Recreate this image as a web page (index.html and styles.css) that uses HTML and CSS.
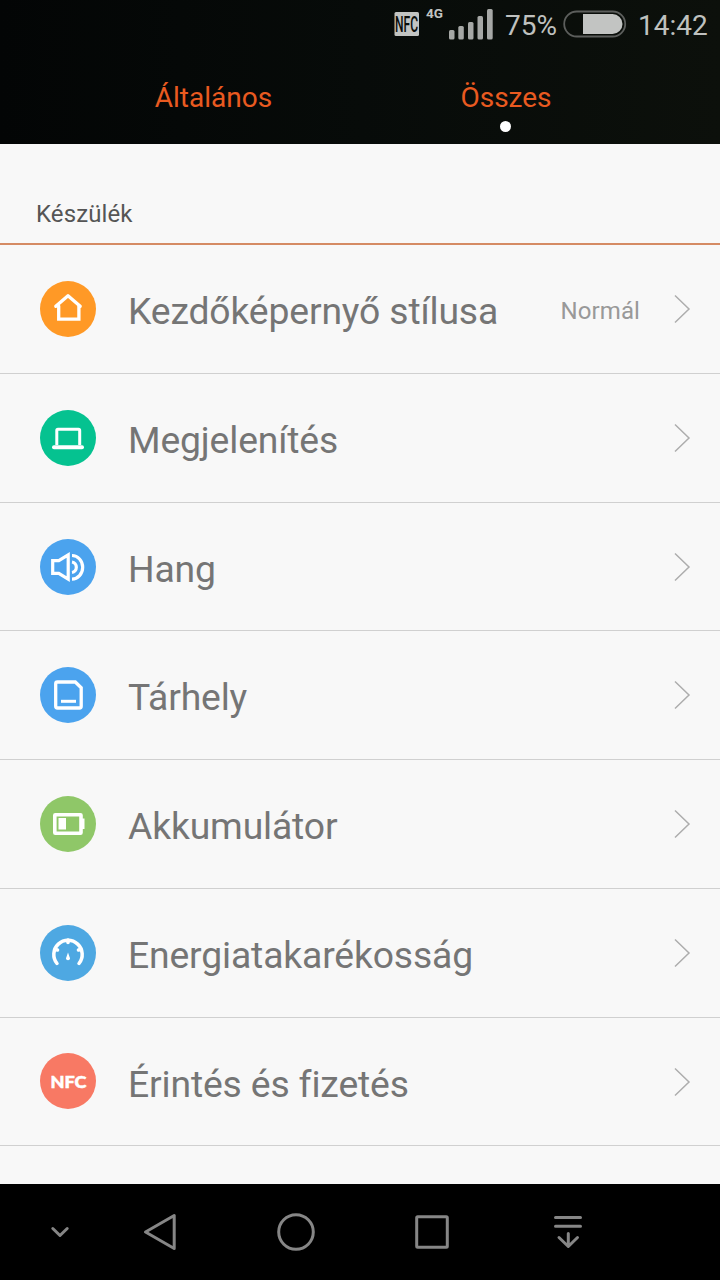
FILE: index.html
```html
<!DOCTYPE html>
<html lang="hu">
<head>
<meta charset="utf-8">
<title>Beállítások</title>
<link rel="stylesheet" href="styles.css">
</head>
<body>
<div class="screen">
  <header class="top">
    <div class="status">
      <svg class="status-icons" width="100" height="48" viewBox="0 0 100 48">
        <rect x="0.5" y="12" width="24.5" height="24" rx="1.5" fill="#c2c4c2"/>
        <text class="nfc-small" transform="translate(1 31.8) scale(.56 1)">NFC</text>
        <text class="network" x="32" y="18">4G</text>
        <g fill="#a6a8a6">
          <rect x="55" y="30" width="5.5" height="9.5" rx="1.5"/>
          <rect x="64.300" y="26" width="5.500" height="13.500" rx="1.500"/>
          <rect x="74" y="22" width="5.500" height="17.500" rx="1.500"/>
          <rect x="83.500" y="16" width="5.500" height="23.500" rx="1.500"/>
          <rect x="93" y="9" width="5.700" height="30.500" rx="1.500"/>
        </g>
      </svg>
      <span class="percent">75%</span>
      <svg class="battery" width="64" height="28" viewBox="0 0 64 28">
        <rect x="1.200" y="1.500" width="61" height="25" rx="12.500" fill="none" stroke="#5c5e5c" stroke-width="1.800"/>
        <path d="M20 4H49.500A10 10 0 0 1 49.500 24H20Z" fill="#c2c4c2"/>
      </svg>
      <span class="clock">14:42</span>
    </div>
    <nav class="tabs">
      <div class="tab tab-general">Általános</div>
      <div class="tab tab-all">Összes<i class="dot"></i></div>
    </nav>
  </header>
  <main class="content">
    <h2 class="section">Készülék</h2>
    <ul class="list">
      <li class="row">
        <svg class="icon" viewBox="0 0 56 56"><circle cx="28" cy="28" r="28" fill="#ff9926"/><g fill="none" stroke="#fff" stroke-width="3.300" stroke-linejoin="round" stroke-linecap="round"><path d="M15.800 25.300 28 14.700 40.200 25.300"/><path d="M18.700 25V38.200H38.900V25" stroke-linejoin="miter"/></g></svg>
        <span class="label">Kezdőképernyő stílusa</span><span class="value">Normál</span>
        <svg class="chevron" viewBox="0 0 18 30"><path d="M2 1.500 16 15 2 28.500"/></svg>
      </li>
      <li class="row">
        <svg class="icon" viewBox="0 0 56 56"><circle cx="28" cy="28" r="28" fill="#05c290"/><path d="M16.800 35V20.500Q16.800 19.300 18 19.300H38.500Q39.700 19.300 39.700 20.500V35" fill="none" stroke="#fff" stroke-width="3"/><path d="M14 37.300H42" stroke="#fff" stroke-width="4" stroke-linecap="round"/></svg>
        <span class="label">Megjelenítés</span>
        <svg class="chevron" viewBox="0 0 18 30"><path d="M2 1.500 16 15 2 28.500"/></svg>
      </li>
      <li class="row row-short">
        <svg class="icon" viewBox="0 0 56 56"><circle cx="28" cy="28" r="28" fill="#4ba3ee"/><g fill="none" stroke="#fff" stroke-width="3.200"><path d="M12.700 21.700H18.800L28.200 15.800V40.200L18.800 34.300H12.700Z"/><path d="M32 16.500A10.700 11.800 0 0 1 32 40.100"/><path d="M32 23A5 5.300 0 0 1 32 33.500"/></g></svg>
        <span class="label">Hang</span>
        <svg class="chevron" viewBox="0 0 18 30"><path d="M2 1.500 16 15 2 28.500"/></svg>
      </li>
      <li class="row">
        <svg class="icon" viewBox="0 0 56 56"><circle cx="28" cy="28" r="28" fill="#4ba3ee"/><g fill="none" stroke="#fff" stroke-width="3.300"><path d="M17.500 15H35.300L41.200 20.800V39.300Q41.200 41 39.500 41H17.500Q15.700 41 15.700 39.300V16.700Q15.700 15 17.500 15Z"/><path d="M21 34.300H36" stroke-width="3"/></g></svg>
        <span class="label">Tárhely</span>
        <svg class="chevron" viewBox="0 0 18 30"><path d="M2 1.500 16 15 2 28.500"/></svg>
      </li>
      <li class="row">
        <svg class="icon" viewBox="0 0 56 56"><circle cx="28" cy="28" r="28" fill="#8fc768"/><rect x="14.800" y="18.800" width="26.200" height="18.500" rx=".5" fill="none" stroke="#fff" stroke-width="3.600"/><path d="M18.500 22H26V33.500H18.500ZM42 22.500H44.500V33H42Z" fill="#fff"/></svg>
        <span class="label">Akkumulátor</span>
        <svg class="chevron" viewBox="0 0 18 30"><path d="M2 1.500 16 15 2 28.500"/></svg>
      </li>
      <li class="row">
        <svg class="icon" viewBox="0 0 56 56"><circle cx="28" cy="28" r="28" fill="#4ea8e2"/><g fill="none" stroke="#fff" stroke-linecap="round"><path d="M17 38.500A14.200 14.200 0 1 1 39 38.500" stroke-width="3.500"/><path d="M28 15V17.500M15.500 24.500 17.500 25M40.500 24.500 38.500 25" stroke-width="3.600"/></g><path d="M28 27.500 30 33.300A2 2 0 1 1 26 33.300Z" fill="#fff"/></svg>
        <span class="label">Energiatakarékosság</span>
        <svg class="chevron" viewBox="0 0 18 30"><path d="M2 1.500 16 15 2 28.500"/></svg>
      </li>
      <li class="row row-short">
        <svg class="icon icon-nfc" viewBox="0 0 56 56"><circle cx="28" cy="28" r="28" fill="#f87964"/><text class="nfc-text" x="10.500" y="34.800" textLength="36" lengthAdjust="spacingAndGlyphs">NFC</text></svg>
        <span class="label">Érintés és fizetés</span>
        <svg class="chevron" viewBox="0 0 18 30"><path d="M2 1.500 16 15 2 28.500"/></svg>
      </li>
    </ul>
  </main>
  <footer class="nav">
    <svg viewBox="0 0 720 96" width="720" height="96" fill="none" stroke="#868686" stroke-width="3" stroke-linecap="round" stroke-linejoin="round">
      <path d="M52.800 44.500 60 51.500 67.200 44.500"/>
      <path d="M145.500 48 174.200 31.500V64.500Z"/>
      <circle cx="296" cy="48" r="17.300"/>
      <rect x="416.700" y="32.700" width="30.600" height="30.600" rx="1"/>
      <path d="M555.500 33.500H580.500M555.500 42.300H580.500M568.300 49.500V62M559 53.500 568.300 62.500 577.500 53.500"/>
    </svg>
  </footer>
</div>
</body>
</html>
```
FILE: styles.css
```css
* { box-sizing: border-box; }
body { margin: 0; font-family: Roboto, "Noto Sans", sans-serif; }
.screen { width: 720px; height: 1280px; display: flex; flex-direction: column; overflow: hidden; background: #f8f8f8; }
.top { height: 144px; background: linear-gradient(90deg, #030505, #070b09 50%, #0c100b); }
.status { height: 48px; display: flex; align-items: center; padding-left: 394px; color: #bfc1bf; font-size: 28px; line-height: 48px; white-space: nowrap; }
.status-icons { flex: none; }
.nfc-small { font-size: 21.500px; font-weight: 500; fill: #090d0a; }
.network { font-size: 13.500px; font-weight: 700; fill: #c2c4c2; }
.percent { width: 57px; margin-left: 11px; padding-top: 3px; }
.battery { flex: none; margin-left: 1px; }
.clock { margin-left: 11px; padding-top: 3px; }
.tabs { height: 96px; display: grid; grid-template-columns: 213px 1fr; column-gap: 92px; padding: 0 61px 0 107px; color: #e95a20; font-size: 28px; line-height: 99px; text-align: center; }
.tab { position: relative; white-space: nowrap; }
.tab-all { width: 188px; }
.dot { position: absolute; left: 88px; top: 73px; width: 11px; height: 11px; border-radius: 50%; background: #fff; }
.content { flex: 1; }
.section { height: 101px; margin: 0; padding: 53px 0 0 36px; border-bottom: 2px solid #d58b64; color: #555; font-size: 24px; font-weight: 400; line-height: 34px; letter-spacing: .1px; }
.list { margin: 0; padding: 0; list-style: none; }
.row { height: 129px; display: flex; align-items: center; padding: 0 29px 0 40px; border-bottom: 1px solid #d0d0d0; }
.row-short { height: 128px; }
.icon { width: 56px; height: 56px; flex: none; }
.icon-nfc { margin-bottom: 1px; }
.label { flex: 1; margin-left: 32px; padding-top: 4px; color: #757575; font-size: 37.300px; letter-spacing: -.15px; font-variant-ligatures: no-common-ligatures; white-space: nowrap; }
.value { margin-right: 33px; padding-top: 4px; color: #999; font-size: 24px; letter-spacing: .1px; }
.chevron { width: 18px; height: 30px; flex: none; fill: none; stroke: #adadad; stroke-width: 1.500px; }
.nfc-text { font-family: Lato, Roboto, sans-serif; font-size: 16.500px; font-weight: 900; fill: #fff; stroke: #fff; stroke-width: .5px; }
.nav { height: 96px; background: #000; }
.nav svg { display: block; }
```
